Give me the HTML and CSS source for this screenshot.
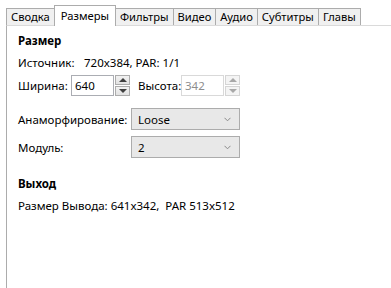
FILE: index.html
```html
<!DOCTYPE html>
<html lang="ru">
<head>
    <meta charset="UTF-8">
    <title>Размеры</title>
    <link rel="stylesheet" href="styles.css">
</head>
<body>
    <div class="tabs">
        <div class="tab">Сводка</div>
        <div class="tab active">Размеры</div>
        <div class="tab">Фильтры</div>
        <div class="tab">Видео</div>
        <div class="tab">Аудио</div>
        <div class="tab">Субтитры</div>
        <div class="tab">Главы</div>
    </div>

    <div class="panel">
        <div class="section-title">Размер</div>
        <div class="row source">
            <span class="label-source">Источник:</span>
            <span>720x384, PAR: 1/1</span>
        </div>

        <div class="row size-row">
            <span class="label-width">Ширина:</span>
            <div class="spin">
                <div class="spin-input">640</div>
                <div class="spin-btns">
                    <div class="spin-btn"><span class="arrow up"></span></div>
                    <div class="spin-btn"><span class="arrow down"></span></div>
                </div>
            </div>
            <span class="label-height">Высота:</span>
            <div class="spin disabled">
                <div class="spin-input">342</div>
                <div class="spin-btns">
                    <div class="spin-btn"><span class="arrow up"></span></div>
                    <div class="spin-btn"><span class="arrow down"></span></div>
                </div>
            </div>
        </div>

        <div class="form-grid">
            <span class="form-label">Анаморфирование:</span>
            <div class="combo">
                <span>Loose</span>
                <svg width="7" height="5" viewBox="0 0 7 5"><path d="M0.5 0.8 L3.5 3.8 L6.5 0.8" fill="none" stroke="#8a8a8a" stroke-width="1"/></svg>
            </div>
            <span class="form-label">Модуль:</span>
            <div class="combo">
                <span>2</span>
                <svg width="7" height="5" viewBox="0 0 7 5"><path d="M0.5 0.8 L3.5 3.8 L6.5 0.8" fill="none" stroke="#8a8a8a" stroke-width="1"/></svg>
            </div>
        </div>

        <div class="section-title output">Выход</div>
        <div class="row">Размер Вывода: 641x342,&nbsp; PAR 513x512</div>
    </div>
</body>
</html>
```

FILE: styles.css
```css
* {
    margin: 0;
    padding: 0;
    box-sizing: border-box;
}

body {
    width: 391px;
    height: 288px;
    overflow: hidden;
    background: #ffffff;
    font-family: 'Noto Sans', 'Open Sans', sans-serif;
    font-size: 11.5px;
    color: #000;
}

.tabs {
    display: flex;
    align-items: flex-end;
    height: 25px;
    padding-left: 6px;
    font-size: 11.2px;
}

.tab {
    height: 17px;
    line-height: 15px;
    padding: 0 4px;
    background: #f0f0f0;
    border: 1px solid #acacac;
    border-bottom: none;
    margin-left: -1px;
    white-space: nowrap;
}

.tab:first-child {
    margin-left: 0;
}

.tab.active {
    height: 21px;
    line-height: 19px;
    background: #fff;
    margin-bottom: -1px;
    padding: 0 6px;
    position: relative;
    z-index: 1;
}

.panel {
    margin-left: 6px;
    height: 263px;
    border-top: 1px solid #dadada;
    border-left: 1px solid #acacac;
    padding: 6px 0 0 11px;
}

.section-title {
    font-weight: bold;
    height: 18px;
    line-height: 18px;
}

.section-title.output {
    margin-top: 17px;
}

.row {
    display: flex;
    align-items: center;
    height: 18px;
    margin-top: 3px;
    white-space: nowrap;
}

.label-source {
    width: 66px;
}

.size-row {
    height: 21px;
    margin-top: 4px;
}

.label-width {
    width: 53px;
}

.label-height {
    margin-left: 8px;
    width: 43px;
}

.spin {
    display: flex;
    height: 21px;
}

.spin-input {
    width: 43px;
    height: 21px;
    border: 1px solid #abadb3;
    padding-left: 3px;
    line-height: 19px;
    background: #fff;
}

.spin-btns {
    display: flex;
    flex-direction: column;
    gap: 1px;
    margin-left: 1px;
    width: 15px;
}

.spin-btn {
    flex: 1;
    border: 1px solid #acacac;
    background: linear-gradient(#f2f2f2, #e2e2e2);
    display: flex;
    align-items: center;
    justify-content: center;
}

.arrow {
    width: 0;
    height: 0;
    border-left: 4px solid transparent;
    border-right: 4px solid transparent;
}

.arrow.up {
    border-bottom: 4px solid #404040;
}

.arrow.down {
    border-top: 4px solid #404040;
}

.spin.disabled .spin-input {
    border-color: #d9d9d9;
    color: #8d8d8d;
}

.spin.disabled .spin-btn {
    border-color: #d5d5d5;
    background: #f4f4f4;
}

.spin.disabled .arrow.up {
    border-bottom-color: #a8a8a8;
}

.spin.disabled .arrow.down {
    border-top-color: #a8a8a8;
}

.form-grid {
    display: grid;
    grid-template-columns: 113px 109px;
    row-gap: 6px;
    align-items: center;
    margin-top: 12px;
}

.combo {
    height: 22px;
    border: 1px solid #acacac;
    background: #e8e8e8;
    display: flex;
    align-items: center;
    justify-content: space-between;
    padding: 0 8px 0 6px;
}

.combo svg {
    display: block;
}
```
